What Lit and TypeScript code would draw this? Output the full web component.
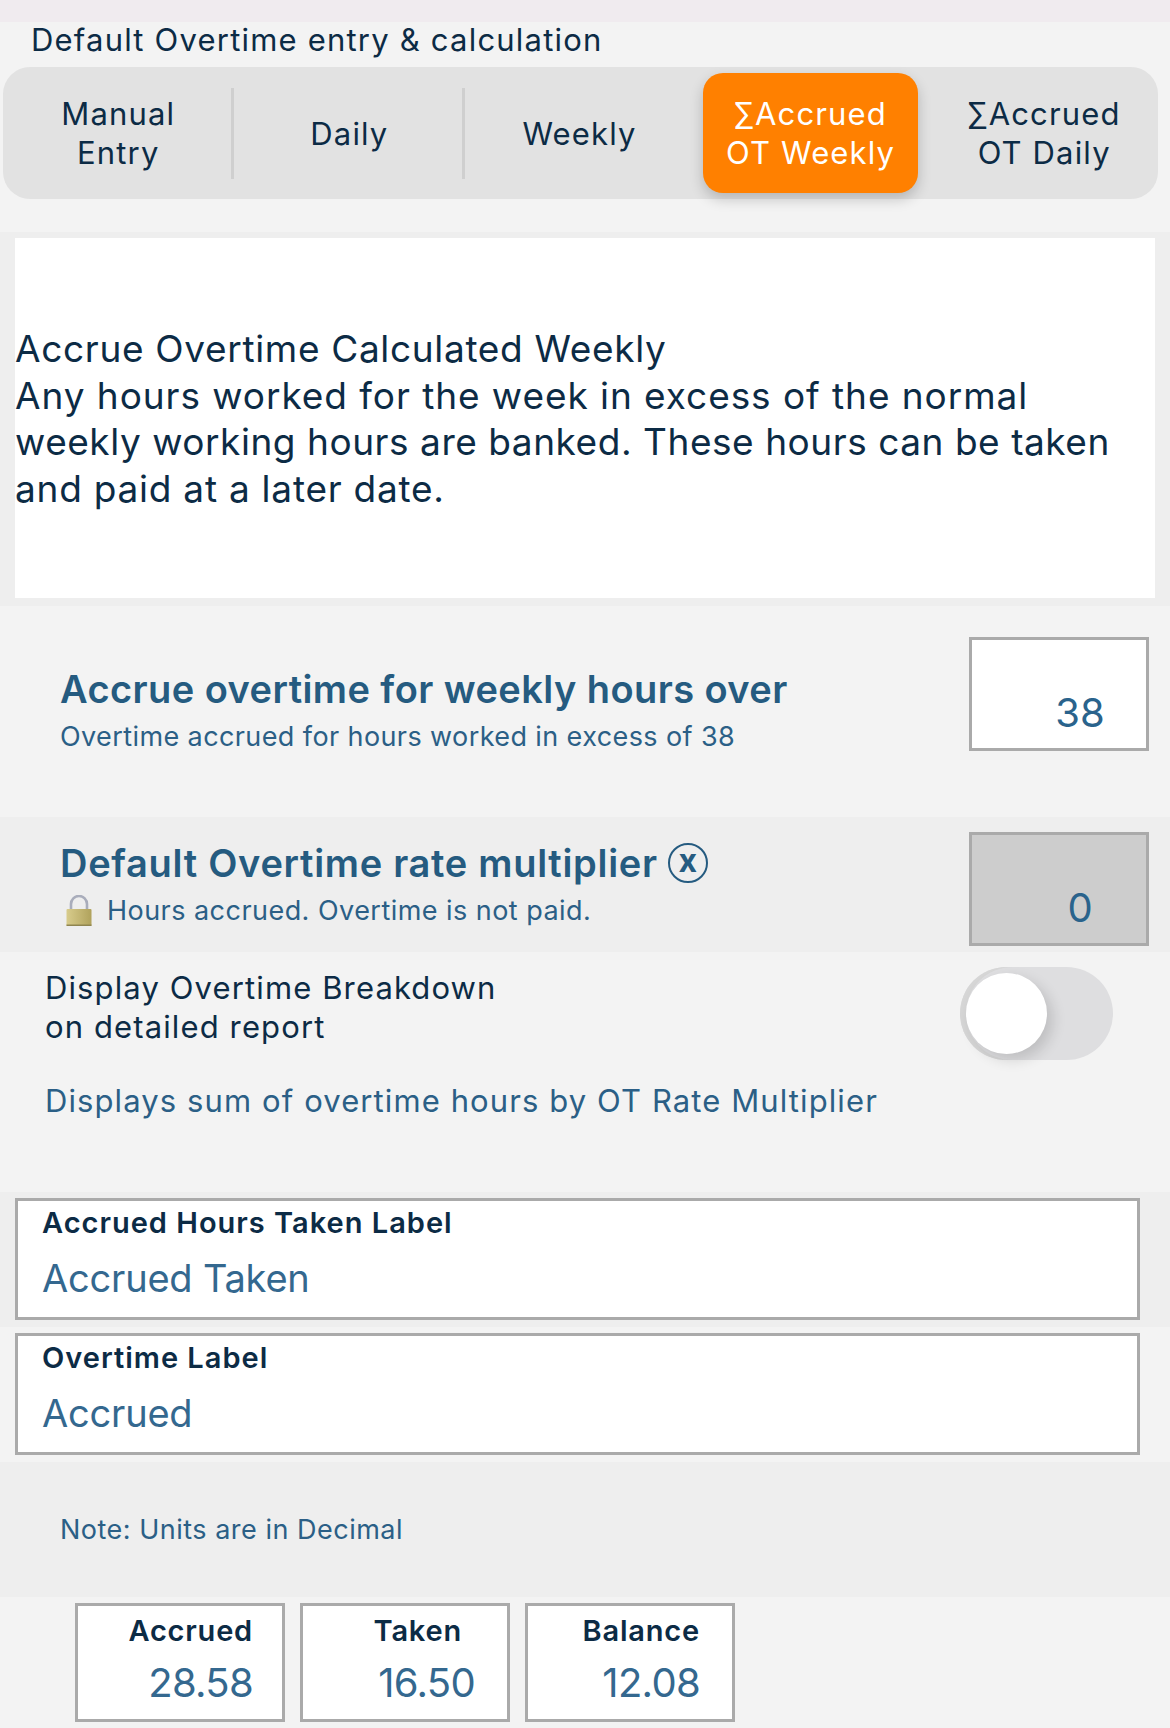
import { LitElement, html, css } from "lit";
import { customElement } from "lit/decorators.js";

@customElement("app-root")
export class AppRoot extends LitElement {
  static styles = css`
    :host { display: block; width: 1170px; height: 1728px; overflow: hidden; background: #f3f3f3; font-family: Inter, "Noto Sans", sans-serif; color: #0c2b45; }
    * { box-sizing: border-box; }
    .top { height: 22px; background: #f0ebef; }
    .title { height: 45px; padding-left: 31px; font-size: 31px; letter-spacing: 1.2px; line-height: 36px; white-space: nowrap; }
    .tabs { margin: 0 12px 0 3px; height: 132px; border-radius: 27px; background: #e2e2e2; display: flex; padding: 6px 0; }
    .tab { width: 231px; display: flex; align-items: center; justify-content: center; text-align: center; font-size: 31px; letter-spacing: 1.15px; line-height: 39px; }
    .tab.sep { position: relative; }
    .tab.sep::after { content: ""; position: absolute; right: 0; top: 15px; bottom: 14px; width: 3px; background: #cfcfcf; }
    .tab.d { width: 232px; }
    .tab.w { width: 229px; }
    .tab.active { width: 216px; margin: 0 0 0 9px; background: #ff8000; color: #fff; border-radius: 20px; box-shadow: 0 6px 14px rgba(0,0,0,.2); }
    .tab.last { width: 240px; padding-left: 12px; }
    .desc-band { margin-top: 33px; height: 374px; background: #eeeeee; padding: 6px 15px 8px; }
    .desc { height: 360px; background: #fff; display: flex; align-items: center; font-size: 37px; letter-spacing: 0.54px; line-height: 46.5px; padding-top: 2px; white-space: nowrap; }
    .l1 { letter-spacing: 0.67px; }
    .l2 { letter-spacing: 0.94px; }
    .l4 { letter-spacing: 0.76px; }
    .row1 { height: 211px; display: flex; justify-content: space-between; padding: 31px 21px 0 60px; }
    .h { font-size: 38px; font-weight: 600; color: #255b80; letter-spacing: 0.42px; line-height: 46px; white-space: nowrap; }
    .sub { font-size: 27px; letter-spacing: 0.4px; color: #2b5f86; line-height: 34px; white-space: nowrap; }
    .row1 .h { margin-top: 29px; }
    .row1 .sub { margin-top: 8px; }
    .num { width: 180px; height: 114px; border: 3px solid #aaa; background: #fff; color: #2a638c; font-size: 40px; line-height: 48px; text-align: center; padding: 49px 0 0 42px; }
    .num.off { background: #cdcdcd; }
    .row2 { height: 135px; background: #eeeeee; display: flex; justify-content: space-between; padding: 15px 21px 0 60px; }
    .row2 .h { display: flex; align-items: center; gap: 10px; height: 54px; margin-top: 4px; letter-spacing: 0.7px; }
    .x { width: 40px; height: 40px; border: 2.5px solid #255b80; border-radius: 50%; display: flex; align-items: center; justify-content: center; font-size: 32px; line-height: 32px; font-weight: 700; padding-bottom: 5px; letter-spacing: 0; }
    .lockline { display: flex; align-items: center; gap: 14px; margin-left: 5px; margin-top: 4px; letter-spacing: 0.46px; }
    .lockline svg { display: block; }
    .toggle-sec { height: 240px; position: relative; padding: 16px 0 0 45px; }
    .tl { font-size: 31px; letter-spacing: 1.12px; line-height: 39px; white-space: nowrap; }
    .tsub { margin-top: 35px; font-size: 31px; letter-spacing: 1.1px; line-height: 39px; color: #2b5f86; white-space: nowrap; }
    .toggle { position: absolute; left: 960px; top: 15px; width: 153px; height: 93px; border-radius: 47px; background: #dedee0; box-shadow: inset 6px 0 0 0 #d6d6d6; }
    .knob { position: absolute; left: 6px; top: 6px; width: 81px; height: 81px; border-radius: 50%; background: #fff; box-shadow: 6px 6px 14px rgba(0,0,0,.14); }
    .fields-wrap { height: 135px; background: #eeeeee; padding: 6px 30px 6px 15px; }
    .fields-wrap.alt { background: #f3f3f3; }
    .field { height: 122px; border: 3px solid #aaa; background: #fff; padding: 4px 0 0 24px; }
    .fl { font-size: 29px; font-weight: 600; letter-spacing: 1px; line-height: 36px; white-space: nowrap; }
    .fv { font-size: 38px; letter-spacing: -0.2px; line-height: 48px; margin-top: 13px; color: #34688f; white-space: nowrap; }
    .note { height: 135px; background: #eeeeee; padding: 51px 0 0 60px; font-size: 27px; letter-spacing: 0.5px; line-height: 34px; color: #2b5f86; }
    .boxes { display: flex; gap: 15px; padding: 6px 0 0 75px; }
    .box { width: 210px; height: 119px; border: 3px solid #aaa; background: #fff; text-align: right; padding: 7px 29px 0 0; }
    .box.alt { padding-right: 32px; }
    .box .fl { line-height: 36px; letter-spacing: 0.8px; }
    .box .val { font-size: 40px; letter-spacing: -0.7px; line-height: 48px; margin-top: 10px; color: #34688f; }
    .box.taken .fl { padding-right: 13px; }
  `;

  render() {
    return html`
      <div class="top"></div>
      <div class="title">Default Overtime entry &amp; calculation</div>
      <div class="tabs">
        <div class="tab sep">Manual<br />Entry</div>
        <div class="tab sep d">Daily</div>
        <div class="tab w">Weekly</div>
        <div class="tab active">∑Accrued<br />OT Weekly</div>
        <div class="tab last">∑Accrued<br />OT Daily</div>
      </div>
      <div class="desc-band">
        <div class="desc">
          <div>
            <div class="l1">Accrue Overtime Calculated Weekly</div>
            <div class="l2">Any hours worked for the week in excess of the normal</div>
            <div>weekly working hours are banked. These hours can be taken</div>
            <div class="l4">and paid at a later date.</div>
          </div>
        </div>
      </div>
      <div class="row1">
        <div>
          <div class="h">Accrue overtime for weekly hours over</div>
          <div class="sub">Overtime accrued for hours worked in excess of 38</div>
        </div>
        <div class="num">38</div>
      </div>
      <div class="row2">
        <div>
          <div class="h">Default Overtime rate multiplier <span class="x">x</span></div>
          <div class="sub lockline">
            <svg width="28" height="32" viewBox="0 0 28 32">
              <defs>
                <linearGradient id="g" x1="0" y1="0" x2="1" y2="0">
                  <stop offset="0" stop-color="#d8cc8c" />
                  <stop offset="1" stop-color="#b0a25c" />
                </linearGradient>
              </defs>
              <path d="M6 15V9a8 8 0 0 1 16 0v6" fill="none" stroke="#a9adbb" stroke-width="2.6" />
              <rect x="1.5" y="14" width="25" height="17" rx="1" fill="url(#g)" />
              <rect x="1.5" y="29.5" width="25" height="1.5" fill="#8f8550" />
            </svg>
            <span>Hours accrued. Overtime is not paid.</span>
          </div>
        </div>
        <div class="num off">0</div>
      </div>
      <div class="toggle-sec">
        <div class="tl">Display Overtime Breakdown<br />on detailed report</div>
        <div class="tsub">Displays sum of overtime hours by OT Rate Multiplier</div>
        <div class="toggle"><div class="knob"></div></div>
      </div>
      <div class="fields-wrap">
        <div class="field">
          <div class="fl">Accrued Hours Taken Label</div>
          <div class="fv">Accrued Taken</div>
        </div>
      </div>
      <div class="fields-wrap alt">
        <div class="field">
          <div class="fl">Overtime Label</div>
          <div class="fv">Accrued</div>
        </div>
      </div>
      <div class="note">Note: Units are in Decimal</div>
      <div class="boxes">
        <div class="box"><div class="fl">Accrued</div><div class="val">28.58</div></div>
        <div class="box taken alt"><div class="fl">Taken</div><div class="val">16.50</div></div>
        <div class="box alt"><div class="fl">Balance</div><div class="val">12.08</div></div>
      </div>
    `;
  }
}
